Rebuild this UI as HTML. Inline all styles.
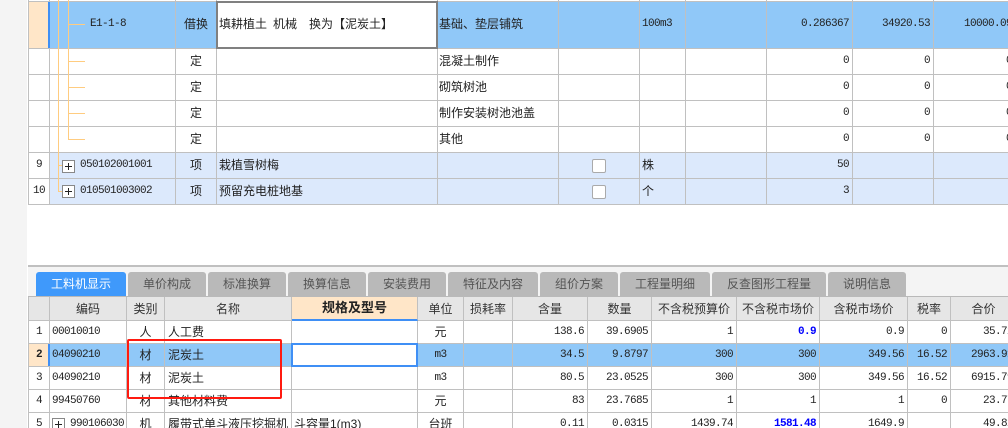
<!DOCTYPE html>
<html><head><meta charset="utf-8">
<style>
html,body{margin:0;padding:0;background:#fff}
#p{position:relative;width:1008px;height:428px;overflow:hidden;background:#fff;font-family:"Liberation Sans","WenQuanYi Zen Hei","Noto Sans CJK SC",sans-serif;font-size:12px;color:#222}
.a{position:absolute}
table{position:absolute;left:28px;border-collapse:separate;border-spacing:0;table-layout:fixed}
td{box-sizing:border-box;border-right:1px solid #c0c0c0;border-bottom:1px solid #c0c0c0;padding:0 2px;white-space:nowrap;overflow:hidden;font-size:12px;line-height:14px}
td:first-child{border-left:1px solid #c0c0c0;text-align:center;padding:0}
.t1 td{padding-bottom:2px}
.t1 td.f{padding-left:1px}
.m{font-family:"Liberation Mono",monospace;font-size:11px;letter-spacing:-.6px;text-align:right;padding-right:3px}
.c{text-align:center}
.sel td{background:#90c8f8}
.lt td{background:#dce9fc}
td.w{background:#fff}
td.o{background:#ffe6c8}
.t1 .top0 td{padding:0;height:2px;font-size:0;line-height:0}
.head td{background:#e6e6e6;text-align:center;padding:0;color:#333}
td.spec{background:#ffe6c8;border-bottom:2px solid #3f8ff5;font-weight:bold;font-size:13px;color:#222}
.tree{position:absolute;background:#ffcc80}
.box{position:absolute;box-sizing:border-box;width:13px;height:13px;border:1px solid #888;background:#fff}
.box:before{content:"";position:absolute;left:2px;right:2px;top:5px;height:1px;background:#222}
.box:after{content:"";position:absolute;top:2px;bottom:2px;left:5px;width:1px;background:#222}
.chk{position:absolute;box-sizing:border-box;left:592px;width:14px;height:14px;border:1px solid #aaa;border-radius:2px;background:#fff}
.tab{position:absolute;top:272px;height:24px;background:#b9b9b9;border-radius:3px 3px 0 0;text-align:center;line-height:25px;font-size:12px;color:#555}
.b{color:#0000ff;font-weight:bold}
</style></head><body>
<div id="p">
<div class="a" style="left:0;top:0;width:27px;height:428px;background:#f4f4f4"></div>

<table class="t1" style="top:0;width:987px">
<colgroup><col style="width:22px"><col style="width:126px"><col style="width:41px"><col style="width:221px"><col style="width:121px"><col style="width:81px"><col style="width:46px"><col style="width:81px"><col style="width:86px"><col style="width:81px"><col style="width:82px"></colgroup>
<tr class="top0" style="height:2px"><td></td><td></td><td></td><td></td><td></td><td></td><td></td><td></td><td></td><td></td><td></td></tr>
<tr class="sel" style="height:47px"><td class="o"></td><td></td><td class="c">借换</td><td></td><td class="f">基础、垫层铺筑</td><td></td><td class="m" style="text-align:left;padding-left:2px;overflow:visible">100m3</td><td></td><td class="m">0.286367</td><td class="m">34920.53</td><td class="m">10000.09</td></tr>
<tr style="height:26px"><td></td><td></td><td class="c">定</td><td></td><td class="f">混凝土制作</td><td></td><td></td><td></td><td class="m">0</td><td class="m">0</td><td class="m">0</td></tr>
<tr style="height:26px"><td></td><td></td><td class="c">定</td><td></td><td class="f">砌筑树池</td><td></td><td></td><td></td><td class="m">0</td><td class="m">0</td><td class="m">0</td></tr>
<tr style="height:26px"><td></td><td></td><td class="c">定</td><td></td><td class="f">制作安装树池池盖</td><td></td><td></td><td></td><td class="m">0</td><td class="m">0</td><td class="m">0</td></tr>
<tr style="height:26px"><td></td><td></td><td class="c">定</td><td></td><td class="f">其他</td><td></td><td></td><td></td><td class="m">0</td><td class="m">0</td><td class="m">0</td></tr>
<tr class="lt" style="height:26px"><td class="w m" style="text-align:center;padding:0 0 2px">9</td><td class="m" style="text-align:left;padding-left:30px">050102001001</td><td class="c">项</td><td>栽植雪树梅</td><td></td><td></td><td>株</td><td></td><td class="m">50</td><td></td><td></td></tr>
<tr class="lt" style="height:26px"><td class="w m" style="text-align:center;padding:0 0 2px">10</td><td class="m" style="text-align:left;padding-left:30px">010501003002</td><td class="c">项</td><td>预留充电桩地基</td><td></td><td></td><td>个</td><td></td><td class="m">3</td><td></td><td></td></tr>
</table>

<div class="a" style="left:48px;top:2px;width:2px;height:46px;background:#3f8ff5"></div>
<div class="tree" style="left:58px;top:0;width:1px;height:192px"></div>
<div class="tree" style="left:68px;top:0;width:1px;height:140px"></div>
<div class="tree" style="left:68px;top:24px;width:17px;height:1px"></div>
<div class="tree" style="left:68px;top:61px;width:17px;height:1px"></div>
<div class="tree" style="left:68px;top:87px;width:17px;height:1px"></div>
<div class="tree" style="left:68px;top:113px;width:17px;height:1px"></div>
<div class="tree" style="left:68px;top:139px;width:17px;height:1px"></div>
<div class="tree" style="left:58px;top:165px;width:5px;height:1px"></div>
<div class="tree" style="left:58px;top:191px;width:5px;height:1px"></div>
<div class="box" style="left:62px;top:160px"></div>
<div class="box" style="left:62px;top:185px"></div>
<div class="a" style="left:90px;top:17px;font:11px/14px 'Liberation Mono',monospace;letter-spacing:-.6px">E1-1-8</div>

<div class="a" style="left:216px;top:1px;width:222px;height:48px;box-sizing:border-box;border:2px solid #808080;background:#fff"></div>
<div class="a" style="left:219px;top:17px;line-height:14px">填耕植土</div>
<div class="a" style="left:273px;top:17px;line-height:14px">机械</div>
<div class="a" style="left:309px;top:17px;line-height:14px">换为【泥炭土】</div>
<div class="chk" style="top:159px"></div>
<div class="chk" style="top:185px"></div>

<div class="a" style="left:28px;top:265px;width:980px;height:2px;background:#c0c0c0"></div>
<div class="a" style="left:28px;top:267px;width:980px;height:29px;background:#f4f4f4"></div>
<div class="a" style="left:28px;top:296px;width:980px;height:1px;background:#b9b9b9"></div>
<div class="tab" style="left:36px;width:90px;background:#3f99fb;color:#fff">工料机显示</div>
<div class="tab" style="left:128px;width:78px">单价构成</div>
<div class="tab" style="left:208px;width:78px">标准换算</div>
<div class="tab" style="left:288px;width:78px">换算信息</div>
<div class="tab" style="left:368px;width:78px">安装费用</div>
<div class="tab" style="left:448px;width:90px">特征及内容</div>
<div class="tab" style="left:540px;width:78px">组价方案</div>
<div class="tab" style="left:620px;width:90px">工程量明细</div>
<div class="tab" style="left:712px;width:114px">反查图形工程量</div>
<div class="tab" style="left:828px;width:78px">说明信息</div>

<table style="top:297px;width:989px">
<colgroup><col style="width:22px"><col style="width:77px"><col style="width:38px"><col style="width:127px"><col style="width:126px"><col style="width:46px"><col style="width:49px"><col style="width:75px"><col style="width:64px"><col style="width:85px"><col style="width:83px"><col style="width:88px"><col style="width:43px"><col style="width:66px"></colgroup>
<tr class="head" style="height:24px"><td></td><td>编码</td><td>类别</td><td>名称</td><td class="spec">规格及型号</td><td>单位</td><td>损耗率</td><td>含量</td><td>数量</td><td>不含税预算价</td><td>不含税市场价</td><td>含税市场价</td><td>税率</td><td>合价</td></tr>
<tr style="height:23px"><td class="m" style="text-align:center;padding:0">1</td><td class="m" style="text-align:left;padding-left:2px">00010010</td><td class="c">人</td><td style="padding-left:3px">人工费</td><td></td><td class="c">元</td><td></td><td class="m">138.6</td><td class="m">39.6905</td><td class="m">1</td><td class="m b">0.9</td><td class="m">0.9</td><td class="m">0</td><td class="m">35.72</td></tr>
<tr class="sel" style="height:23px"><td class="o m" style="text-align:center;padding:0;font-weight:bold">2</td><td class="m" style="text-align:left;padding-left:2px">04090210</td><td class="c">材</td><td style="padding-left:3px">泥炭土</td><td class="w"></td><td class="m" style="text-align:center;padding:0">m3</td><td></td><td class="m">34.5</td><td class="m">9.8797</td><td class="m">300</td><td class="m">300</td><td class="m">349.56</td><td class="m">16.52</td><td class="m">2963.91</td></tr>
<tr style="height:23px"><td class="m" style="text-align:center;padding:0">3</td><td class="m" style="text-align:left;padding-left:2px">04090210</td><td class="c">材</td><td style="padding-left:3px">泥炭土</td><td></td><td class="m" style="text-align:center;padding:0">m3</td><td></td><td class="m">80.5</td><td class="m">23.0525</td><td class="m">300</td><td class="m">300</td><td class="m">349.56</td><td class="m">16.52</td><td class="m">6915.79</td></tr>
<tr style="height:23px"><td class="m" style="text-align:center;padding:0">4</td><td class="m" style="text-align:left;padding-left:2px">99450760</td><td class="c">材</td><td style="padding-left:3px">其他材料费</td><td></td><td class="c">元</td><td></td><td class="m">83</td><td class="m">23.7685</td><td class="m">1</td><td class="m">1</td><td class="m">1</td><td class="m">0</td><td class="m">23.77</td></tr>
<tr style="height:23px"><td class="m" style="text-align:center;padding:0">5</td><td class="m" style="text-align:left;padding-left:20px">990106030</td><td class="c">机</td><td style="padding-left:3px">履带式单斗液压挖掘机</td><td>斗容量1(m3)</td><td class="c">台班</td><td></td><td class="m">0.11</td><td class="m">0.0315</td><td class="m">1439.74</td><td class="m b">1581.48</td><td class="m">1649.9</td><td class="m"></td><td class="m">49.82</td></tr>
</table>

<div class="a" style="left:48px;top:344px;width:2px;height:22px;background:#3f8ff5"></div>
<div class="a" style="left:291px;top:343px;width:127px;height:24px;box-sizing:border-box;border:2px solid #3f8ff5;background:#fff"></div>
<div class="box" style="left:52px;top:418px"></div>
<div class="a" style="left:127px;top:339px;width:155px;height:60px;box-sizing:border-box;border:2.5px solid #ff1a10;border-radius:2px"></div>
</div>
</body></html>
